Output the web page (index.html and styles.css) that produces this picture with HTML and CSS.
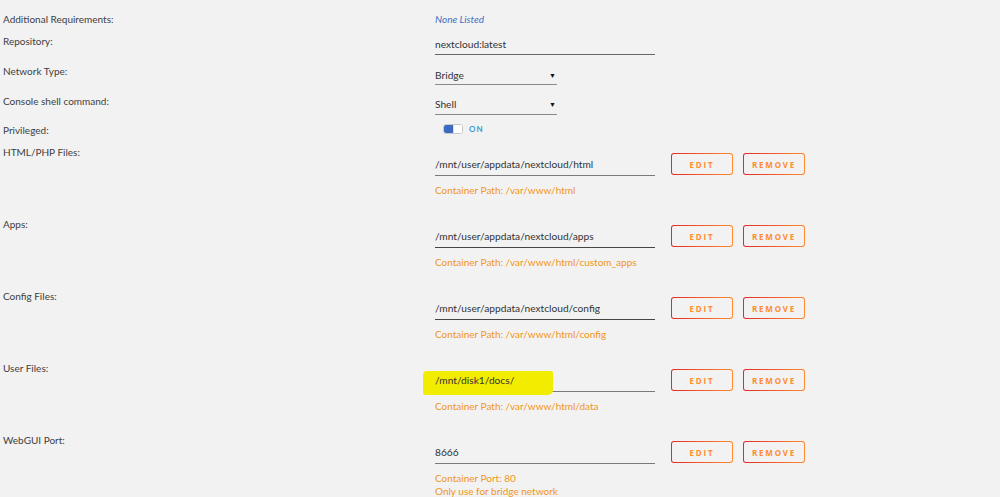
FILE: index.html
```html
<!DOCTYPE html>
<html lang="en">

<head>
    <meta charset="UTF-8">
    <meta name="viewport" content="width=device-width, initial-scale=1.0">
    <title>Update Container</title>
    <link rel="stylesheet" href="styles.css">
</head>

<body>
    <div class="form">

        <div class="row row-req">
            <div class="label">Additional Requirements:</div>
            <div class="value"><span class="none">None Listed</span></div>
        </div>

        <div class="row row-repo">
            <div class="label">Repository:</div>
            <div class="value">
                <div class="input wide">nextcloud:latest</div>
            </div>
        </div>

        <div class="row row-select">
            <div class="label">Network Type:</div>
            <div class="value">
                <div class="input select">Bridge <span class="arrow">&#9660;</span></div>
            </div>
        </div>

        <div class="row row-select second">
            <div class="label">Console shell command:</div>
            <div class="value">
                <div class="input select">Shell <span class="arrow">&#9660;</span></div>
            </div>
        </div>

        <div class="row row-priv">
            <div class="label">Privileged:</div>
            <div class="value">
                <div class="switch"><span class="track"></span><span class="knob"></span></div>
                <span class="on">ON</span>
            </div>
        </div>

        <!-- paths & ports -->
        <div class="row row-path">
            <div class="label">HTML/PHP Files:</div>
            <div class="value">
                <div class="line">
                    <div class="input wide">/mnt/user/appdata/nextcloud/html</div>
                    <button class="btn">EDIT</button>
                    <button class="btn">REMOVE</button>
                </div>
                <div class="hint">Container Path: /var/www/html</div>
            </div>
        </div>

        <div class="row row-path">
            <div class="label">Apps:</div>
            <div class="value">
                <div class="line">
                    <div class="input wide dark">/mnt/user/appdata/nextcloud/apps</div>
                    <button class="btn">EDIT</button>
                    <button class="btn">REMOVE</button>
                </div>
                <div class="hint">Container Path: /var/www/html/custom_apps</div>
            </div>
        </div>

        <div class="row row-path">
            <div class="label">Config Files:</div>
            <div class="value">
                <div class="line">
                    <div class="input wide dark">/mnt/user/appdata/nextcloud/config</div>
                    <button class="btn">EDIT</button>
                    <button class="btn">REMOVE</button>
                </div>
                <div class="hint">Container Path: /var/www/html/config</div>
            </div>
        </div>

        <div class="row row-path">
            <div class="label">User Files:</div>
            <div class="value">
                <div class="line">
                    <div class="input wide marked">
                        <span class="highlight"></span>
                        <span class="text">/mnt/disk1/docs/</span>
                    </div>
                    <button class="btn">EDIT</button>
                    <button class="btn">REMOVE</button>
                </div>
                <div class="hint">Container Path: /var/www/html/data</div>
            </div>
        </div>

        <div class="row row-path">
            <div class="label">WebGUI Port:</div>
            <div class="value">
                <div class="line">
                    <div class="input wide">8666</div>
                    <button class="btn">EDIT</button>
                    <button class="btn">REMOVE</button>
                </div>
                <div class="hint">Container Port: 80<br>Only use for bridge network</div>
            </div>
        </div>

    </div>
</body>

</html>
```

FILE: styles.css
```css
body {
    margin: 0;
    background-color: #f2f2f2;
    font-family: Lato, "Liberation Sans", sans-serif;
    font-size: 10px;
    color: #444;
    overflow: hidden;
}

.form {
    padding: 12px 0 0 3px;
}

.row {
    display: grid;
    grid-template-columns: 432px 1fr;
}

.label {
    line-height: 14px;
    color: #404040;
}

.value {
    line-height: 14px;
}

.row-req {
    height: 22px;
}

.none {
    font-style: italic;
    color: #3f6fc4;
}

.row-repo {
    height: 30px;
}

.row-select {
    height: 30px;
}

.row-select.second {
    height: 29px;
}

.input {
    color: #333;
    font-size: 10.2px;
    padding: 3px 0 3px 0;
    border-bottom: 1px solid #666;
}

.wide {
    width: 220px;
}

.select {
    width: 122px;
    padding-top: 4px;
    padding-bottom: 2px;
    border-bottom-color: #888;
    display: flex;
    justify-content: space-between;
}

.row-select.second .select {
    padding-top: 3px;
    padding-bottom: 3px;
}

.arrow {
    font-size: 7px;
    color: #111;
    margin-right: 1px;
}

.row-priv {
    height: 22px;
}

.row-priv .value {
    display: flex;
    align-items: center;
    height: 14px;
    padding-left: 8px;
    gap: 6px;
}

.switch {
    position: relative;
    width: 20px;
    height: 10px;
    border-radius: 3px;
    background-color: #fff;
    border: 1px solid #c8c8c8;
    box-sizing: border-box;
    margin-top: -2px;
}

.track {
    display: block;
    width: 11px;
    height: 8px;
    background-color: #3d6ac0;
    border-radius: 2px 0 0 2px;
}

.knob {
    position: absolute;
    right: 0;
    top: 0;
    width: 8px;
    height: 8px;
    background-color: #fff;
    border-left: 1px solid #ddd;
    border-radius: 0 2px 2px 0;
}

.on {
    font-size: 8px;
    font-weight: bold;
    letter-spacing: 1px;
    color: #3a9bd5;
    margin-top: -2px;
}

.row-path {
    height: 72px;
}

.row-path .value {
    padding-top: 8px;
}

.line {
    display: flex;
    align-items: flex-start;
}

.line .input {
    padding: 4px 0 4px 0;
    border-bottom-color: #7a7a7a;
}

.line .input.dark {
    border-bottom-color: #444;
}

.btn {
    width: 62px;
    height: 22px;
    margin-left: 10px;
    padding: 0;
    border: 1px solid transparent;
    border-radius: 3px;
    background:
        linear-gradient(#f2f2f2, #f2f2f2) padding-box,
        linear-gradient(90deg, #e22828, #ff8c2f) border-box;
    color: #ff8c2f;
    font-family: "Open Sans", "Liberation Sans", sans-serif;
    font-size: 8px;
    font-weight: bold;
    letter-spacing: 1.8px;
}

.line .input + .btn {
    margin-left: 16px;
}

.hint {
    margin-top: 8px;
    line-height: 13px;
    color: #f0961a;
}

.marked {
    position: relative;
}

.highlight {
    position: absolute;
    left: -12px;
    top: 2px;
    width: 130px;
    height: 24px;
    background-color: #f2ec00;
    border-radius: 4px 2px 5px 3px;
}

.marked .text {
    position: relative;
}
```
